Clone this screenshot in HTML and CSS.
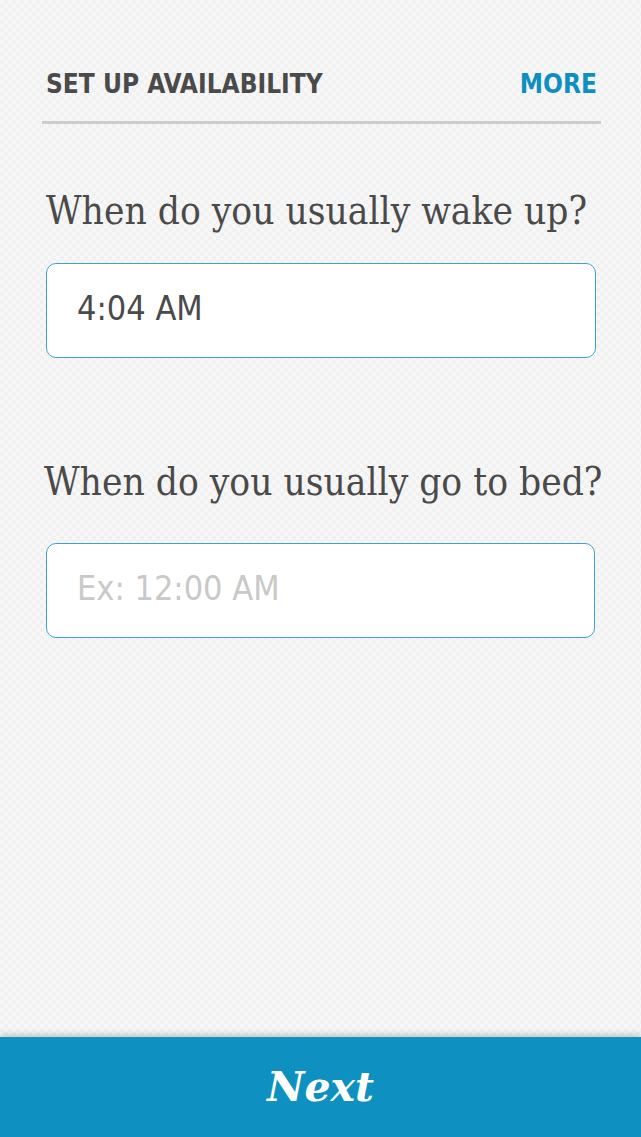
FILE: index.html
```html
<!DOCTYPE html>
<html>
<head>
<meta charset="utf-8">
<link rel="stylesheet" href="styles.css">
</head>
<body>
<div class="screen">
  <header class="topbar">
    <span class="title">SET UP AVAILABILITY</span>
    <span class="more">MORE</span>
  </header>
  <main class="content">
    <section class="field">
      <h2 class="question">When do you usually wake up?</h2>
      <div class="input filled">4:04 AM</div>
    </section>
    <section class="field second">
      <h2 class="question">When do you usually go to bed?</h2>
      <div class="input placeholder">Ex: 12:00 AM</div>
    </section>
  </main>
  <footer class="nextbar">Next</footer>
</div>
</body>
</html>
```
FILE: styles.css
```css
html, body {
  margin: 0;
  padding: 0;
}
body {
  width: 641px;
  height: 1137px;
  overflow: hidden;
  background-color: #f7f7f7;
  background-image:
    linear-gradient(45deg, rgba(0,0,0,0.022) 25%, transparent 25%, transparent 75%, rgba(0,0,0,0.022) 75%),
    linear-gradient(45deg, rgba(0,0,0,0.022) 25%, transparent 25%, transparent 75%, rgba(0,0,0,0.022) 75%);
  background-size: 8px 8px;
  background-position: 0 0, 4px 4px;
}
.screen {
  height: 1137px;
  display: flex;
  flex-direction: column;
}
.topbar {
  margin: 0 40px 0 42px;
  padding: 68px 4px 0 4px;
  height: 53px;
  box-sizing: content-box;
  border-bottom: 3px solid #cdcdcd;
  display: flex;
  justify-content: space-between;
  align-items: flex-start;
  font-family: "DejaVu Sans Condensed", "DejaVu Sans", sans-serif;
  font-weight: bold;
  font-size: 26px;
  line-height: 32px;
}
.title { color: #4a4a4a; }
.more { color: #0f8fc1; }
.content {
  flex: 1;
  padding: 0 45px 0 46px;
}
.question {
  margin: 0;
  font-family: "DejaVu Serif Condensed", "DejaVu Serif", serif;
  font-weight: normal;
  font-size: 38.5px;
  line-height: 44px;
  color: #4a4a4a;
  white-space: nowrap;
}
.field { padding-top: 65px; }
.field .question { margin-bottom: 30px; }
.field.second { padding-top: 102px; }
.field.second .question { margin-left: -2px; margin-bottom: 39px; }
.input {
  height: 95px;
  box-sizing: border-box;
  background: #fff;
  border: 1px solid #3ea3d0;
  border-radius: 10px;
  padding: 0 0 6px 30px;
  display: flex;
  align-items: center;
  font-family: "DejaVu Sans Condensed", "DejaVu Sans", sans-serif;
  font-size: 34px;
}
.input.filled { color: #4a4a4a; }
.input.placeholder { color: #c9c9c9; margin-right: 1px; }
.nextbar {
  height: 100px;
  background: #0e90c0;
  box-shadow: 0 -3px 6px rgba(0,0,0,0.18);
  color: #fff;
  display: flex;
  align-items: center;
  justify-content: center;
  font-family: "DejaVu Serif", serif;
  font-style: italic;
  font-weight: bold;
  font-size: 41px;
}
```
